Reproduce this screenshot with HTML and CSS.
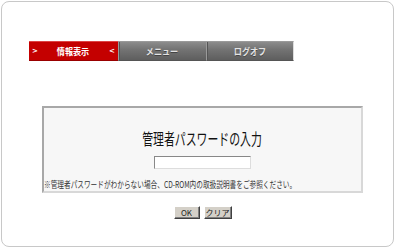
FILE: index.html
```html
<!DOCTYPE html>
<html lang="ja">
<head>
    <meta charset="UTF-8">
    <title>情報表示</title>
    <link rel="stylesheet" href="styles.css">
</head>
<body>
<div class="frame">
    <ul class="nav">
        <li class="tab active"><span class="arr">&gt;</span><span class="label">情報表示</span><span class="arr">&lt;</span></li>
        <li class="tab"><span class="label">メニュー</span></li>
        <li class="tab"><span class="label">ログオフ</span></li>
    </ul>
    <div class="box">
        <h2><span>管理者パスワードの入力</span></h2>
        <div class="field"><input type="password"></div>
        <p class="note"><span>※管理者パスワードがわからない場合、CD-ROM内の取扱説明書をご参照ください。</span></p>
    </div>
    <div class="buttons">
        <button class="btn">OK</button>
        <button class="btn">クリア</button>
    </div>
</div>
</body>
</html>
```
FILE: styles.css
```css
*{margin: 0; padding: 0;}
body{
    background: #fff;
    font-family: "Noto Sans CJK JP", "Liberation Sans", sans-serif;
}
.frame{
    width: 391px;
    height: 244px;
    margin: 1px;
    border: 1px solid #c8c8c8;
    border-radius: 8px;
}
.nav{
    list-style: none;
    display: flex;
    width: 266px;
    height: 20px;
    margin: 39px 0 0 27px;
}
.tab{
    flex: 0 0 88px;
    display: flex;
    align-items: center;
    justify-content: center;
    background: linear-gradient(#8c8c8c, #747474 40%, #5e5e5e);
    border-top: 1px solid #9a9a9a;
    border-bottom: 1px solid #555;
    box-sizing: border-box;
    color: #e4e4e4;
    font-size: 9px;
    font-weight: bold;
    text-shadow: 0 1px 0 #444;
}
.tab + .tab{border-left: 1px solid #9a9a9a; box-shadow: inset 1px 0 0 #555;}
.tab:last-child{border-right: 1px solid #ddd;}
.tab.active{
    flex-basis: 89px;
    justify-content: space-between;
    padding: 0 3px;
    background: #c40000;
    border-top-color: #d44;
    border-bottom-color: #900;
    color: #fff;
    text-shadow: none;
}
.label{display: inline-block; transform: scaleX(0.9);}
.arr{font-family: "DejaVu Sans", sans-serif; font-size: 7px;}
.box{
    width: 321px;
    height: 87px;
    box-sizing: border-box;
    margin: 45px 0 0 40px;
    border: 2px solid #a8a8a8;
    border-right-color: #d8d8d8;
    border-bottom-color: #d8d8d8;
    background: #f7f7f7;
    text-align: center;
}
.box h2{
    margin-top: 20px;
    height: 20px;
    font-size: 16px;
    font-weight: normal;
    line-height: 20px;
    color: #111;
}
.box h2 span{display: inline-block; transform: scaleX(0.68);}
.field{margin-top: 8px; height: 14px;}
.field input{
    width: 97px;
    height: 13px;
    box-sizing: border-box;
    border: 1px solid #888;
    border-right-color: #ddd;
    border-bottom-color: #ddd;
    background: #fff;
    vertical-align: top;
}
.note{
    margin-top: 10px;
    font-size: 9px;
    line-height: 10px;
    color: #333;
    text-align: left;
    white-space: nowrap;
}
.note span{display: inline-block; transform-origin: left center; transform: scaleX(0.74);}
.buttons{
    display: flex;
    justify-content: center;
    gap: 4px;
    width: 321px;
    margin: 13px 0 0 40px;
}
.btn{
    width: 26px;
    height: 13px;
    background: #d4d0c8;
    border: 1px solid;
    border-color: #fff #404040 #404040 #fff;
    box-shadow: inset -1px -1px 0 #808080;
    font-family: inherit;
    font-size: 8px;
    line-height: 10px;
    color: #222;
}
.btn + .btn{width: 28px;}
```
